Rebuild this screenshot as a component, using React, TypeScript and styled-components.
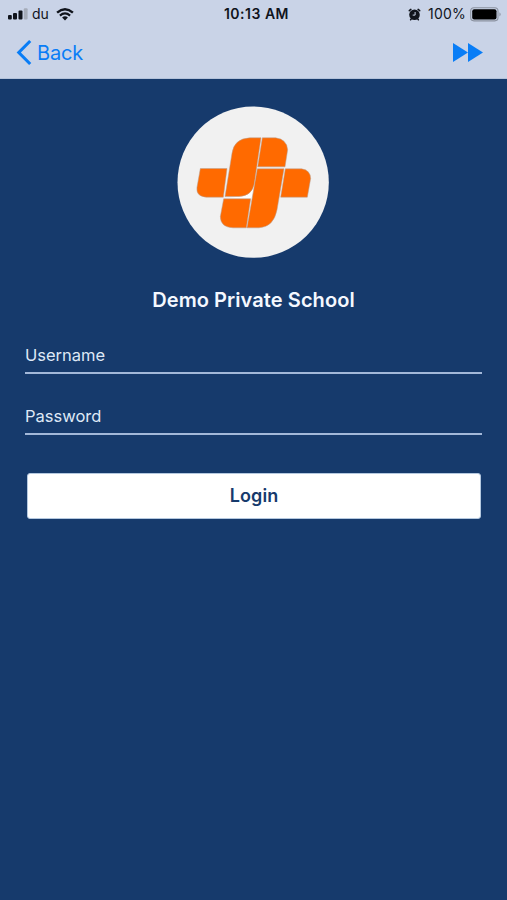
import React, { useState } from "react";
import styled, { createGlobalStyle } from "styled-components";

const GlobalStyle = createGlobalStyle`
  * { box-sizing: border-box; }
  body { margin: 0; background: #163a6c; font-family: Inter, "Liberation Sans", sans-serif; }
`;

const Screen = styled.div`
  display: flex;
  flex-direction: column;
  width: 100%;
  min-height: 900px;
  background: #163a6c;
`;

const Header = styled.header`
  height: 79px;
  background: #c9d3e7;
  border-bottom: 1px solid #b3c2da;
`;

const StatusBar = styled.div`
  display: grid;
  grid-template-columns: 1fr auto 1fr;
  align-items: center;
  height: 28px;
  padding: 0 5px 0 8px;
  color: #10141c;
`;

const StatusGroup = styled.div<{ $end?: boolean }>`
  display: flex;
  align-items: center;
  justify-content: ${(p) => (p.$end ? "flex-end" : "flex-start")};
`;

const StatusText = styled.span`
  font-size: 14px;
  line-height: 20px;
  font-weight: 400;
`;

const Clock = styled(StatusText)`
  padding-left: 3px;
  font-weight: 600;
  letter-spacing: 0.5px;
`;

const Carrier = styled(StatusText)`
  margin: 0 7px 0 4px;
`;

const Charge = styled(StatusText)`
  margin: 0 4px 0 7px;
  letter-spacing: 0.2px;
`;

const NavBar = styled.nav`
  display: flex;
  align-items: center;
  justify-content: space-between;
  height: 49px;
  padding: 0 24px 0 16px;
`;

const NavButton = styled.button`
  display: flex;
  align-items: center;
  gap: 5px;
  padding: 0;
  border: 0;
  background: none;
  color: #097df6;
  font: 400 20px/28px Inter, sans-serif;
  letter-spacing: -0.2px;
`;

const Content = styled.main`
  display: flex;
  flex-direction: column;
  padding: 27px 25px 0;
`;

const Emblem = styled.svg`
  display: block;
  align-self: center;
  margin-right: 1px;
`;

const Title = styled.h1`
  margin: 28px 0 0;
  color: #f4f8ff;
  font-size: 20px;
  font-weight: 600;
  line-height: 28px;
  letter-spacing: 0.08px;
  text-align: center;
`;

const Form = styled.form`
  display: flex;
  flex-direction: column;
  padding-top: 27px;
`;

const Field = styled.input`
  width: 457px;
  height: 33px;
  margin-bottom: 28px;
  padding: 0 0 4px;
  border: 0;
  border-bottom: 2px solid #a3b8d9;
  border-radius: 0;
  outline: 0;
  background: transparent;
  color: #dfe8f6;
  font: 400 16.5px/24px Inter, sans-serif;
  &::placeholder { color: #dfe8f6; opacity: 1; }
`;

const LoginButton = styled.button`
  width: 454px;
  height: 46px;
  margin: 10px 0 0 2px;
  padding: 0;
  border: 1px solid #b4c8df;
  border-radius: 3px;
  background: #fff;
  color: #163a6c;
  font: 600 18px/26px Inter, sans-serif;
  letter-spacing: 0.1px;
`;

const SignalIcon = () => (
  <svg width="20" height="12" viewBox="0 0 20 12">
    <g fill="#10141c">
      <rect x="0" y="7" width="3.8" height="4.5" rx="1" />
      <rect x="5" y="5" width="4" height="6.5" rx="1" />
      <rect x="10.5" y="2.5" width="4" height="9" rx="1" />
    </g>
    <rect x="15.8" y="0.2" width="3.8" height="11.3" rx="1" fill="#a5acb9" />
  </svg>
);

const WifiIcon = () => (
  <svg width="18" height="13" viewBox="0 0 18 13" fill="none" stroke="#10141c">
    <path d="M1.1 4.6Q9 -2 16.9 4.6" strokeWidth="2.5" />
    <path d="M3.9 7.6Q9 3.3 14.1 7.6" strokeWidth="2.2" />
    <path d="M6.1 9.6Q9 7.1 11.9 9.6L9 12.5Z" fill="#10141c" stroke="none" />
  </svg>
);

const AlarmIcon = () => (
  <svg width="13" height="13" viewBox="0 0 13 13">
    <circle cx="6.5" cy="6.7" r="5.3" fill="#10141c" />
    <path d="M1.3 2.7L2.9 1.4M10.1 1.4l1.6 1.3M3.2 11l-.6.8M9.8 11l.6.8" stroke="#10141c" strokeWidth="1.5" strokeLinecap="round" />
    <path d="M7.1 4V7.1H4.7" fill="none" stroke="#c9d3e7" strokeWidth="1" />
  </svg>
);

const BatteryIcon = () => (
  <svg width="32" height="15" viewBox="0 0 32 15">
    <rect x=".7" y=".7" width="27.3" height="13.2" rx="3.3" fill="none" stroke="#8b92a0" strokeWidth="1.1" />
    <rect x="2.2" y="2.2" width="24.3" height="10.2" rx="2" fill="#000" />
    <path d="M29.5 5.2q2.2 2.2 0 4.4z" fill="#858c99" />
  </svg>
);

const BackIcon = () => (
  <svg width="16" height="27" viewBox="0 0 16 27">
    <path d="M14.2 2L2.8 13.5L14.2 25" fill="none" stroke="#097df6" strokeWidth="3.1" />
  </svg>
);

const ForwardIcon = () => (
  <svg width="30" height="20" viewBox="0 0 30 20" fill="#097df6">
    <path d="M0 0L15 9.5L0 19Z" />
    <path d="M15 0L30 9.5L15 19Z" />
  </svg>
);

const SchoolEmblem = () => (
  <Emblem width="152" height="152" viewBox="22 18.5 456 456" role="img" aria-label="School emblem">
    <circle cx="250.5" cy="247" r="227" fill="#f1f1f1" />
    <path d="M166 296L210 290Q248 286 254 250L245 296Z" fill="#fff" />
    <g fill="#ff6a00" stroke="#b5a096" strokeWidth="1.5">
      <path d="M92 206H172L161 292H110Q78 289 82 262Z" />
      <path d="M274 114H240Q194 116 187 160L166 290H208Q248 288 254 250Z" />
      <path d="M278 114H318Q352 118 354 150L346 201H264Z" />
      <path d="M263 207H343L322 330Q312 382 268 384H232Z" />
      <path d="M347 207H396Q422 211 423 236L413 292H333Z" />
      <path d="M162 297H243L230 384H190Q152 382 152 350Z" />
    </g>
  </Emblem>
);

export default function App() {
  const [username, setUsername] = useState("");
  const [password, setPassword] = useState("");

  return (
    <Screen>
      <GlobalStyle />
      <Header>
        <StatusBar>
          <StatusGroup>
            <SignalIcon />
            <Carrier>du</Carrier>
            <WifiIcon />
          </StatusGroup>
          <Clock>10:13 AM</Clock>
          <StatusGroup $end>
            <AlarmIcon />
            <Charge>100%</Charge>
            <BatteryIcon />
          </StatusGroup>
        </StatusBar>
        <NavBar>
          <NavButton type="button">
            <BackIcon />
            Back
          </NavButton>
          <NavButton type="button" aria-label="Forward">
            <ForwardIcon />
          </NavButton>
        </NavBar>
      </Header>
      <Content>
        <SchoolEmblem />
        <Title>Demo Private School</Title>
        <Form onSubmit={(e) => e.preventDefault()}>
          <Field placeholder="Username" value={username} onChange={(e) => setUsername(e.target.value)} />
          <Field
            type="password"
            placeholder="Password"
            value={password}
            onChange={(e) => setPassword(e.target.value)}
          />
          <LoginButton type="submit">Login</LoginButton>
        </Form>
      </Content>
    </Screen>
  );
}
